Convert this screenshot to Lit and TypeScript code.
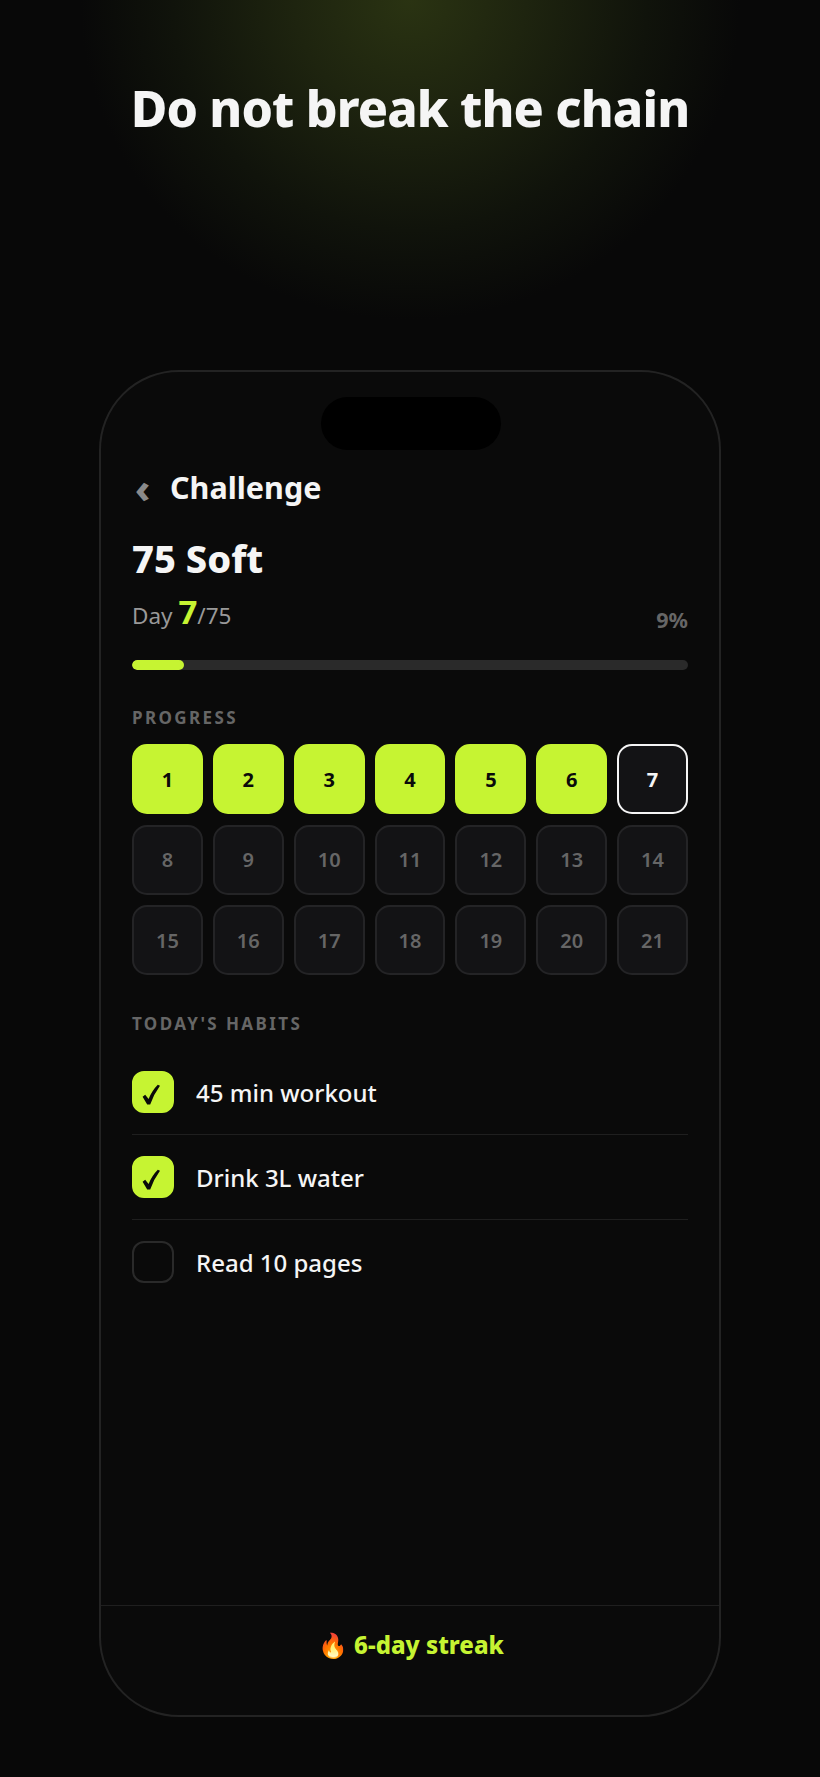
import { LitElement, html, css } from "lit";
import { customElement } from "lit/decorators.js";

@customElement("app-root")
export class AppRoot extends LitElement {
  static styles = css`
    :host { display: block; }
    * { box-sizing: border-box; }
    .page {
      width: 820px; height: 1777px; overflow: hidden; display: flex; flex-direction: column; align-items: center;
      font-family: "Noto Sans", sans-serif; color: #f5f5f5;
      background: radial-gradient(ellipse 330px 320px at 410px 0, #2a3312 0%, #1e240f 35%, #10130b 72%, #080808 100%), #080808;
    }
    h1 { margin: 70px 0 0; font-size: 50px; line-height: 76px; font-weight: 800; letter-spacing: -0.85px; }
    .phone {
      margin-top: 224px; width: 622px; height: 1347px; border: 2px solid #232323; border-radius: 80px;
      background: #0a0a0a; display: flex; flex-direction: column; position: relative; overflow: hidden;
    }
    .notch { position: absolute; top: 25px; left: 220px; width: 180px; height: 53px; border-radius: 27px; background: #000; }
    .body { flex: 1; padding: 93px 31px 0; }
    .nav { display: flex; align-items: center; gap: 20px; height: 44px; }
    .back { color: #8a8a8a; font-size: 40px; font-weight: 800; line-height: 44px; width: 15px; margin-left: 3px; position: relative; top: 1px; }
    .nav-title { font-size: 30.5px; font-weight: 700; line-height: 44px; color: #f5f5f5; }
    h2 { margin: 22px 0 0; font-size: 38px; line-height: 54px; font-weight: 800; }
    .day { display: flex; justify-content: space-between; align-items: flex-end; margin-top: 5px; }
    .day-l { font-size: 22.5px; color: #999; line-height: 44px; }
    .day-l b { color: #c6f432; font-size: 33px; font-weight: 700; }
    .pct { font-size: 21.5px; font-weight: 700; color: #666; line-height: 28px; margin-bottom: 4px; }
    .track { height: 10px; border-radius: 5px; background: #2a2a2a; margin-top: 22px; overflow: hidden; }
    .fill { height: 100%; border-radius: 5px; background: #c6f432; }
    .label { font-size: 17px; font-weight: 700; letter-spacing: 2.4px; color: #666; line-height: 24px; }
    .label.p { margin-top: 36px; }
    .label.h { margin-top: 36.5px; }
    .grid { display: grid; grid-template-columns: repeat(7, 1fr); grid-auto-rows: 70px; gap: 10.5px 10px; margin-top: 14px; }
    .cell { border-radius: 15px; display: flex; align-items: center; justify-content: center;
      font-size: 20px; font-weight: 600; background: #131315; border: 2px solid #242426; color: #666; }
    .cell.done { background: #c6f432; border-color: #c6f432; color: #0a0a0a; font-weight: 700; }
    .cell.cur { background: #131315; border-color: #f5f5f5; color: #f5f5f5; font-weight: 700; }
    .habits { margin-top: 15px; }
    .habit { display: flex; align-items: center; gap: 22px; height: 84.7px; border-bottom: 1px solid #1f1f1f; }
    .habit:last-child { border-bottom: 0; }
    .check { width: 42px; height: 42px; border-radius: 12px; border: 2px solid #2a2a2a; display: flex; align-items: center; justify-content: center; }
    .check.on { background: #c6f432; border-color: #c6f432; }
    .check svg { width: 38px; height: 38px; display: block; fill: #0a0a0a; }
    .habit-t { font-size: 24px; font-weight: 500; color: #f5f5f5; }
    .footer { height: 110px; border-top: 1px solid #1f1f1f; display: flex; align-items: flex-start; justify-content: center; padding: 19px 0 0 2px;
      font-size: 24px; font-weight: 800; color: #c6f432; line-height: 40px; gap: 6px; }
  `;

  render() {
    const days = Array.from({ length: 21 }, (_, i) => i + 1);
    const habits = [["45 min workout", true], ["Drink 3L water", true], ["Read 10 pages", false]] as const;
    const tick = html`<svg viewBox="2 2 38 38" aria-hidden="true"><path d="M10.6 25.8 13.2 23.8l3.4 4.2Q20 19.6 25.8 13.8l2.2 1Q21.6 23.6 18.2 33.4h-3Z"/></svg>`;
    return html`<div class="page">
      <h1>Do not break the chain</h1>
      <div class="phone">
        <div class="notch"></div>
        <div class="body">
          <div class="nav"><span class="back">‹</span><span class="nav-title">Challenge</span></div>
          <h2>75 Soft</h2>
          <div class="day"><span class="day-l">Day <b>7</b>/75</span><span class="pct">9%</span></div>
          <div class="track"><div class="fill" style="width:${(7 / 75) * 100}%"></div></div>
          <div class="label p">PROGRESS</div>
          <div class="grid">
            ${days.map((d) => html`<div class="cell ${d < 7 ? "done" : d === 7 ? "cur" : ""}">${d}</div>`)}
          </div>
          <div class="label h">TODAY'S HABITS</div>
          <div class="habits">
            ${habits.map(([t, on]) => html`<div class="habit"><div class="check ${on ? "on" : ""}">${on ? tick : ""}</div><span class="habit-t">${t}</span></div>`)}
          </div>
        </div>
        <div class="footer"><span>🔥</span><span>6-day streak</span></div>
      </div>
    </div>`;
  }
}
